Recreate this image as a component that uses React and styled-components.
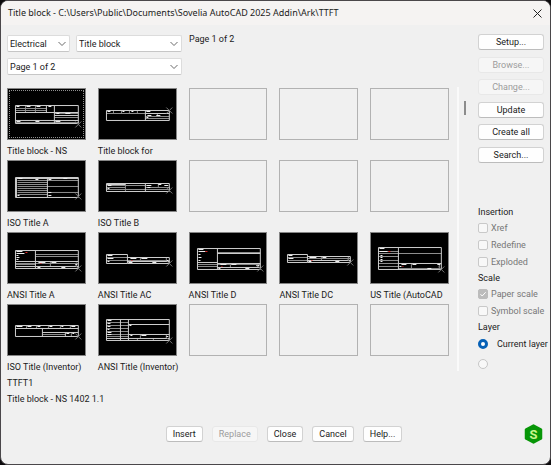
import React, { useState } from "react";
import styled, { createGlobalStyle } from "styled-components";

const GlobalStyle = createGlobalStyle`
  * { box-sizing: border-box; }
  body {
    margin: 0;
    background: #0c0a0c;
    color: #1b1b1b;
    font-family: Roboto, "Liberation Sans", sans-serif;
    font-size: 9px;
    line-height: 12px;
  }
  button, select, input { font: inherit; margin: 0; }
`;

const Dialog = styled.main`
  display: flex;
  flex-direction: column;
  min-height: 100vh;
  background: #f0f0f0;
  border: 1px solid #4a474a;
  border-radius: 8px;
  overflow: hidden;
`;

const TitleBar = styled.header`
  display: flex;
  align-items: center;
  justify-content: space-between;
  height: 24px;
  padding: 0 8px 0 7px;
  background: #f5f3f2;
`;

const Title = styled.h1`
  margin: 0;
  font-family: "Noto Sans", "Open Sans", sans-serif;
  font-size: 9px;
  font-weight: 400;
  white-space: nowrap;
`;

const CloseIcon = styled.button`
  display: flex;
  padding: 0;
  border: 0;
  background: none;
`;

const Body = styled.div`
  display: flex;
  flex: 1;
  padding: 8px 6px 0;
`;

const Browser = styled.section`
  flex: 1;
  min-width: 0;
`;

const Filters = styled.div`
  display: flex;
  gap: 7px;
`;

const FilterFields = styled.div`
  display: grid;
  grid-template-columns: 63px 106px;
  gap: 6px;
  padding-top: 2px;
`;

const Field = styled.label`
  display: grid;
  grid-column: span ${(p) => p.$span || 1};
  align-items: center;
  height: 17px;
  border: 1px solid #dcdcdc;
  border-bottom-color: #c6c6c6;
  border-radius: 2px;
  background: #fff;
  & > * { grid-area: 1 / 1; }
  & > svg { justify-self: end; margin-right: 3px; pointer-events: none; }
`;

const Select = styled.select`
  appearance: none;
  width: 100%;
  height: 15px;
  padding: 0 12px 0 2px;
  border: 0;
  background: transparent;
  color: inherit;
  font-size: 9px;
  line-height: 12px;
`;

const PageInfo = styled.p`
  margin: 0;
  font-size: 9px;
`;

const Gallery = styled.div`
  display: grid;
  grid-template-columns: repeat(5, minmax(0, 1fr));
  grid-auto-rows: 72px;
  column-gap: 12px;
  margin: 13px 8px 0 0;
`;

const Item = styled.div`
  display: flex;
  flex-direction: column;
  gap: 5px;
  font-size: 9px;
`;

const Thumb = styled.button`
  display: block;
  width: 100%;
  height: 52px;
  padding: 0;
  border: 1px solid ${(p) => (p.$empty ? "#b2b2b2" : "#858585")};
  background: ${(p) => (p.$empty ? "#f0f0f0" : "#000")};
  outline: ${(p) => (p.$selected ? "1px dotted #8f8f8f" : "none")};
  outline-offset: -3px;
  & > svg { display: block; width: 100%; height: 50px; }
`;

const Caption = styled.span`
  white-space: nowrap;
`;

const Details = styled.div`
  display: grid;
  gap: 4px;
  font-size: 9px;
  line-height: 12px;
  margin-top: 1px;
`;

const Splitter = styled.div`
  width: 2px;
  height: 284px;
  margin: 54px 5px 0 0;
  background: #fafafa;
`;

const Grip = styled.div`
  width: 2px;
  height: 14px;
  margin: 68px 12px 0 0;
  background: #8c8c8c;
`;

const Side = styled.aside`
  width: 66px;
  padding-top: 1px;
`;

const Actions = styled.div`
  display: flex;
  flex-direction: column;
  justify-content: space-between;
  height: 129px;
  margin-bottom: 43px;
`;

const Button = styled.button`
  height: 16px;
  padding: 0 ${(p) => p.$pad || 0}px;
  border: 1px solid #d2d2d2;
  border-bottom-color: #bcbcbc;
  border-radius: 3px;
  background: #fefefe;
  color: #1b1b1b;
  font-size: 9px;
  line-height: 12px;
  white-space: nowrap;
  &:disabled {
    color: #9c9c9c;
    background: #f6f6f6;
    border-color: #e8e8e8;
  }
`;

const Group = styled.fieldset`
  min-width: 0;
  margin: 0 0 2px;
  padding: 0;
  border: 0;
  font-size: 9px;
`;

const Legend = styled.legend`
  height: 13px;
  padding: 0;
  line-height: 13px;
`;

const Option = styled.label`
  display: flex;
  align-items: center;
  gap: ${(p) => (p.$radio ? 9 : 3)}px;
  height: ${(p) => (p.$radio ? 20 : 17)}px;
  white-space: nowrap;
  color: ${(p) => (p.$dim ? "#777" : "#1b1b1b")};
`;

const CheckCell = styled.span`
  display: grid;
  place-items: center;
  & > * { grid-area: 1 / 1; }
  & > svg { pointer-events: none; }
`;

const Check = styled.input`
  appearance: none;
  width: 10px;
  height: 10px;
  border: 1px solid #c9c9c9;
  border-radius: 2px;
  background: #f8f8f8;
  &:checked { background: #bcbcbc; border-color: #bcbcbc; }
`;

const Radio = styled.input`
  appearance: none;
  flex: none;
  width: 10px;
  height: 10px;
  border: 1px solid #c6c6c6;
  border-radius: 50%;
  background: #f8f8f8;
  &:checked { border: 3px solid #0560b6; background: #fff; }
`;

const Footer = styled.footer`
  display: grid;
  grid-template-columns: 1fr auto 1fr;
  align-items: center;
  padding: 0 7px 20px 24px;
`;

const FooterButtons = styled.div`
  display: flex;
  gap: 9px;
  grid-column: 2;
`;

const Brand = styled.div`
  display: flex;
  justify-content: flex-end;
`;

const Chevron = () => (
  <svg width="8" height="6" viewBox="0 0 8 6" fill="none" stroke="#6a6a6a">
    <path d="M.5 1 4 4.5 7.5 1" />
  </svg>
);

/* Line work of each title block: strong lines, faint lines, filled text runs, red accents, origin cross. */
const drawings = {
  ns: {
    strong: "M8 17H71V35H8ZM39 17V24M8 24H71M47 17V35M8 32H71M47 27H71",
    faint: "M18 17V24M28 17V24M8 20H39M8 22H39M47 25H71M47 29H71M8 34H71",
    runs: "M9 18H12M19 18H23M29 18H33M41 18H44M49 25H52M58 25H63M9 33H13M28 33H32M48 33H53",
    cross: [71, 36],
  },
  blockFor: {
    strong: "M8 22H71V32H8ZM47 22V32M47 25H71",
    faint: "M8 25H47M15 22V25M23 22V25M31 22V25M39 22V25M47 28H71M47 30H71M59 25V28",
    runs: "M9 23H12M24 23H26M33 23H35M48 23H52M49 27H53M58 27H62M48 29H50",
    cross: [71, 22],
  },
  isoA: {
    strong: "M8 17H71V37H8ZM40 17V37M8 18H71M9 18V37",
    faint: "M10 20H71M10 22H40M10 24H40M10 26H71M10 28H40M10 30H40M10 32H71M10 34H40",
    runs: "M11 18H15M28 19H31M41 19H44M56 18H60M41 32H44M41 35H44M10 35H12",
    cross: [71, 36],
  },
  isoB: {
    strong: "M8 23H71V31H8ZM47 23V31M8 24H27",
    faint: "M27 23V31M8 27H27M8 29H71M47 27H71M10 25H47M60 23V27",
    runs: "M9 25H13M9 28H11M48 25H53M49 27H52M60 24H63M66 25H70",
    cross: [71, 30],
  },
  ansiA: {
    strong: "M8 18H71V36H8ZM28 18V36M8 29H71M8 34H71",
    faint: "M28 22H71M28 24H71M8 31H71M8 32H28M43 29V34M69 30V34",
    runs: "M9 19H15M9 21H17M9 23H11M9 25H12M9 27H11M31 30H38M44 30H49M30 35H33M54 35H58M68 32H70",
    red: "M18 20H20M33 31H34",
    cross: [71, 36],
  },
  ansiAC: {
    strong: "M8 22H29V31H8ZM29 25H71V31H29M29 29H71",
    faint: "M8 25H29M8 28H71M42 25V29M68 25V29",
    runs: "M9 23H14M9 26H15M9 29H11M32 26H38M43 26H49M30 30H34M54 30H58M68 28H70",
    red: "M33 28H34",
    cross: [71, 31],
  },
  ansiD: {
    strong: "M8 16H71V37H8ZM28 16V37M28 21H71M8 30H28M28 31H71M28 35H71",
    faint: "M28 20H71M8 32H71M8 34H28M41 31V35M68 31V35",
    runs: "M9 17H14M9 19H16M9 22H11M9 25H12M9 28H11M31 32H37M42 32H47M29 36H31M56 36H60M67 33H70",
    red: "M16 19H18M32 34H33",
    cross: [71, 36],
  },
  ansiDC: {
    strong: "M8 22H28V30H8ZM28 24H71V30H28M28 28H71",
    faint: "M8 25H28M8 28H28M28 26H71M42 24V28M69 24V28",
    runs: "M9 23H13M9 26H14M30 25H37M43 25H47M29 29H32M56 29H60",
    red: "M32 28H33",
    cross: [71, 30],
  },
  us: {
    strong: "M8 15H71V37H8ZM28 15V37M28 31H71",
    faint: "M8 21H71M8 19H28M8 24H28M8 28H28M8 31H28M8 34H28M28 36H71M41 31V36M69 31V36",
    runs: "M9 16H14M9 19H17M10 23H12M10 25H12M10 27H12M10 29H12M31 32H36M42 32H46M29 34H31M57 36H61M67 32H70",
    red: "M18 19H20M32 34H33",
    cross: [71, 37],
  },
  isoInv: {
    strong: "M8 21H71V32H8ZM8 24H71M35 24V32M35 28H71M58 28V32",
    faint: "M19 21V24M29 21V24M41 21V24M53 21V24M63 21V24M64 28V32M35 30H58",
    runs: "M9 22H15M20 22H24M30 22H33M42 22H45M54 22H56M64 22H68M59 29H62M65 29H67",
    cross: [71, 32],
  },
  ansiInv: {
    strong: "M8 15H71V36H8ZM30 15V36M22 15V36M30 20H71M30 30H71M8 34H71",
    faint: "M8 18H30M8 21H30M8 24H30M8 27H30M8 30H30M8 32H30M42 30V34M68 30V34M39 34V36M55 34V36",
    runs: "M9 16H13M9 19H12M9 22H12M9 25H11M9 28H13M9 30H13M31 21H33M32 31H34M43 31H48M68 32H70",
    cross: [71, 36],
  },
};

const Drawing = ({ strong, faint, runs, red, cross: [x, y] }) => (
  <svg viewBox="1 1 77 50" fill="none" aria-hidden="true">
    <g transform="translate(.5 .5)">
      <path d={faint} stroke="#8e8e8e" />
      <path d={strong} stroke="#cfcfcf" />
      <path d={runs} stroke="#f2f2f2" />
      {red && <path d={red} stroke="#e02020" />}
      <path d={`M${x - 3} ${y - 3}l6 6m0 -6l-6 6`} stroke="#777" />
    </g>
  </svg>
);

const items = [
  ["ns", "Title block - NS"], ["blockFor", "Title block for"], null, null, null,
  ["isoA", "ISO Title A"], ["isoB", "ISO Title B"], null, null, null,
  ["ansiA", "ANSI Title A"], ["ansiAC", "ANSI Title AC"], ["ansiD", "ANSI Title D"],
  ["ansiDC", "ANSI Title DC"], ["us", "US Title (AutoCAD"],
  ["isoInv", "ISO Title (Inventor)"], ["ansiInv", "ANSI Title (Inventor)"], null, null, null,
];

const Dropdown = ({ name, value, span }) => (
  <Field $span={span}>
    <Select aria-label={name} defaultValue={value}>
      <option>{value}</option>
    </Select>
    <Chevron />
  </Field>
);

const CheckOption = ({ label, checked }) => (
  <Option $dim>
    <CheckCell>
      <Check type="checkbox" disabled defaultChecked={checked} />
      {checked && (
        <svg width="8" height="8" viewBox="0 0 8 8" fill="none" stroke="#fff">
          <path d="M1.5 4.2 3.2 6 6.7 2.2" />
        </svg>
      )}
    </CheckCell>
    {label}
  </Option>
);

export default function App() {
  const [selected, setSelected] = useState(0);
  return (
    <>
      <GlobalStyle />
      <Dialog>
        <TitleBar>
          <Title>{"Title block - C:\\Users\\Public\\Documents\\Sovelia AutoCAD 2025 Addin\\Ark\\TTFT"}</Title>
          <CloseIcon aria-label="Close window">
            <svg width="9" height="9" viewBox="0 0 9 9" stroke="#222">
              <path d="M.5.5l8 8m0-8l-8 8" />
            </svg>
          </CloseIcon>
        </TitleBar>
        <Body>
          <Browser>
            <Filters>
              <FilterFields>
                <Dropdown name="Discipline" value="Electrical" />
                <Dropdown name="Category" value="Title block" />
                <Dropdown name="Page" value="Page 1 of 2" span={2} />
              </FilterFields>
              <PageInfo>Page 1 of 2</PageInfo>
            </Filters>
            <Gallery>
              {items.map((item, i) => (
                <Item key={i}>
                  <Thumb
                    $empty={!item}
                    $selected={i === selected}
                    disabled={!item}
                    aria-label={item ? item[1] : "Empty slot"}
                    onClick={() => setSelected(i)}
                  >
                    {item && <Drawing {...drawings[item[0]]} />}
                  </Thumb>
                  {item && <Caption>{item[1]}</Caption>}
                </Item>
              ))}
            </Gallery>
            <Details>
              <span>TTFT1</span>
              <span>Title block - NS 1402 1.1</span>
            </Details>
          </Browser>
          <Splitter />
          <Grip />
          <Side>
            <Actions>
              <Button>Setup...</Button>
              <Button disabled>Browse...</Button>
              <Button disabled>Change...</Button>
              <Button>Update</Button>
              <Button>Create all</Button>
              <Button>Search...</Button>
            </Actions>
            <Group>
              <Legend>Insertion</Legend>
              <CheckOption label="Xref" />
              <CheckOption label="Redefine" />
              <CheckOption label="Exploded" />
            </Group>
            <Group>
              <Legend>Scale</Legend>
              <CheckOption label="Paper scale" checked />
              <CheckOption label="Symbol scale" />
            </Group>
            <Group>
              <Legend>Layer</Legend>
              <Option $radio>
                <Radio type="radio" name="layer" defaultChecked />
                Current layer
              </Option>
              <Option $radio>
                <Radio type="radio" name="layer" aria-label="Other layer" />
              </Option>
            </Group>
          </Side>
        </Body>
        <Footer>
          <FooterButtons>
            <Button $pad={6}>Insert</Button>
            <Button $pad={6} disabled>Replace</Button>
            <Button $pad={6}>Close</Button>
            <Button $pad={6}>Cancel</Button>
            <Button $pad={6}>Help...</Button>
          </FooterButtons>
          <Brand>
            <svg width="19" height="20" viewBox="0 0 19 20" role="img" aria-label="Sovelia">
              <path d="M9.500 1.500 17 5.500V14.500L9.500 18.500 2 14.500V5.500Z" fill="#079607" stroke="#079607" strokeWidth="2.500" strokeLinejoin="round" />
              <text x="9.500" y="14.500" textAnchor="middle" fontSize="13" fontWeight="700" fill="#c8f58a">S</text>
            </svg>
          </Brand>
        </Footer>
      </Dialog>
    </>
  );
}
